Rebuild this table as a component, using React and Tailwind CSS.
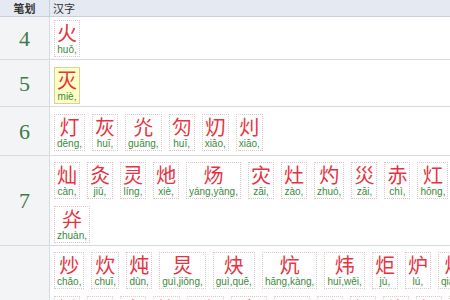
import React from 'react';

const rows = [
  { n: 4, h: 'h-[43px]', pt: 'pt-[3px]', chars: [['火', 'huǒ,']] },
  { n: 5, h: 'h-[47px]', pt: 'pt-[7px]', chars: [['灭', 'miè,', true]] },
  {
    n: 6, h: 'h-[49px]', pt: 'pt-[7px]',
    chars: [['灯', 'dēng,'], ['灰', 'huī,'], ['灮', 'guāng,'], ['灳', 'huī,'], ['灱', 'xiāo,'], ['灲', 'xiāo,']],
  },
  {
    n: 7, h: 'h-[90px]', pt: 'pt-[6px]',
    chars: [
      ['灿', 'càn,'], ['灸', 'jiǔ,'], ['灵', 'líng,'], ['灺', 'xiè,'], ['炀', 'yáng,yàng,'], ['灾', 'zāi,'],
      ['灶', 'zào,'], ['灼', 'zhuó,'], ['災', 'zāi,'], ['赤', 'chì,'], ['灴', 'hōng,'], ['灷', 'zhuàn,'],
    ],
  },
  {
    n: 8, h: 'h-[134px]', pt: 'pt-[6px]',
    chars: [
      ['炒', 'chǎo,'], ['炊', 'chuī,'], ['炖', 'dùn,'], ['炅', 'guì,jiǒng,'], ['炔', 'guì,quē,'],
      ['炕', 'hāng,kàng,'], ['炜', 'huī,wěi,'], ['炬', 'jù,'], ['炉', 'lú,'], ['炝', 'qiàng,'],
      ['炘', 'xīn,'], ['炎', 'yán,'], ['炙', 'zhì,'], ['炆', 'wén,'], ['炚', 'guāng,'], ['炛', 'guāng,'],
      ['炂', 'zhōng,'], ['炃', 'fén,'], ['炄', 'niǔ,'], ['炇', 'bì,'], ['炈', 'yì,'], ['炉', 'lú,'],
      ['炋', 'pī,'], ['炍', 'pàn,'], ['炐', 'pàn,'], ['炑', 'mù,'], ['炓', 'liào,'],
    ],
  },
];

const Card = ({ ch, py, hl }) => (
  <div
    className={`flex flex-col items-center h-[37px] px-[2px] pt-[1px] ${hl ? 'bg-[#ffffc6] border border-solid border-[#d6d29a]' : 'border border-dotted border-[#dcc6c9]'}`}
  >
    <span className="block text-[20px] leading-[22px] text-[#e5343f] font-['Noto_Sans_CJK_SC',sans-serif]">{ch}</span>
    <span className="block text-[10px] leading-[12px] text-[#3b8a3e] font-['Liberation_Sans',sans-serif] whitespace-nowrap">{py}</span>
  </div>
);

export default function App() {
  return (
    <div className="w-[450px] h-[300px] overflow-hidden bg-white font-['Noto_Sans_CJK_SC',sans-serif]">
      <div className="w-[485px]">
        <div className="grid grid-cols-[50px_1fr] h-[17px] bg-[#e5eaf2] border-b border-[#c9d0dc] text-[11px] leading-[16px] text-[#333]">
          <div className="border-r border-[#c9d0dc] text-center font-bold">笔划</div>
          <div className="pl-[3px]">汉字</div>
        </div>
        {rows.map((r) => (
          <div key={r.n} className={`grid grid-cols-[50px_1fr] ${r.h} border-b border-[#d6dae2]`}>
            <div className="bg-[#f3f4f6] border-r border-[#d6dae2] flex items-center justify-center text-[22px] text-[#3f7a4c] font-['Liberation_Serif',serif]">
              {r.n}
            </div>
            <div className={`flex flex-wrap content-start gap-[7px] pl-[4px] ${r.pt} overflow-hidden`}>
              {r.chars.map(([ch, py, hl], i) => (
                <Card key={i} ch={ch} py={py} hl={hl} />
              ))}
            </div>
          </div>
        ))}
      </div>
    </div>
  );
}
